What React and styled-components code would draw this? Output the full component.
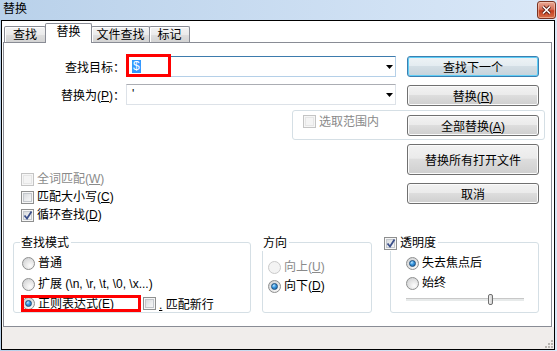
import React from 'react';
import styled, { createGlobalStyle } from 'styled-components';

const GlobalStyle = createGlobalStyle`
  body {
    margin: 0;
    background: #fff;
    font-family: "Liberation Sans", "Noto Sans CJK SC", sans-serif;
    font-size: 12px;
    color: #000;
  }
`;

const Window = styled.div`
  width: 557px;
  height: 351px;
  display: flex;
  flex-direction: column;
  background: linear-gradient(to right, #b9d1ea, #dae8f8);
  overflow: hidden;
`;

const TitleBar = styled.div`
  height: 20px;
  display: flex;
  align-items: flex-start;
  justify-content: space-between;
  padding: 0 1px 0 3px;
`;

const TitleText = styled.span`
  line-height: 18px;
`;

const CloseButton = styled.div`
  box-sizing: border-box;
  width: 19px;
  height: 18px;
  margin-top: 1px;
  display: flex;
  align-items: center;
  justify-content: center;
  border: 1px solid #7a3322;
  border-radius: 3px;
  background: linear-gradient(#e9a995 0%, #d7715a 45%, #c43b1d 55%, #d8704a 100%);
  box-shadow: inset 0 0 0 1px rgba(255, 220, 200, 0.5);
`;

const Client = styled.div`
  flex: 1;
  margin: 0 2px 1px 1px;
  border: 1px solid #000;
  background: #fff;
  display: flex;
  flex-direction: column;
`;

const TabStrip = styled.div`
  height: 21px;
  display: flex;
  align-items: flex-end;
  padding-left: 2px;
`;

const Tab = styled.div`
  position: relative;
  z-index: ${({ $active }) => ($active ? 1 : 0)};
  box-sizing: border-box;
  width: ${({ $w }) => $w}px;
  height: ${({ $active }) => ($active ? 20 : 16)}px;
  margin-left: -1px;
  margin-bottom: ${({ $active }) => ($active ? -1 : 0)}px;
  padding-bottom: ${({ $active }) => ($active ? 3 : 0)}px;
  display: flex;
  align-items: center;
  justify-content: center;
  border: 1px solid #898c95;
  border-bottom: none;
  border-radius: 2px 2px 0 0;
  background: ${({ $active }) =>
    $active ? '#fff' : 'linear-gradient(#f4f4f4 0%, #ebebeb 50%, #dedede 55%, #d3d3d3 100%)'};
  box-shadow: ${({ $active }) => ($active ? 'none' : 'inset 1px 1px 0 #fff')};
  line-height: 14px;

  &:first-child {
    margin-left: 0;
  }
`;

const Panel = styled.div`
  box-sizing: border-box;
  height: 285px;
  margin: 0 2px 0 1px;
  padding-top: 13px;
  border: 1px solid #898c95;
  background: #fff;
`;

const TopGrid = styled.div`
  display: grid;
  grid-template-columns: 122px 166px 104px 11px 132px;
  align-items: start;
`;

const FieldLabel = styled.label`
  grid-column: 1;
  height: 21px;
  margin-top: ${({ $top }) => $top || 0}px;
  padding-right: 1px;
  display: flex;
  align-items: center;
  justify-content: flex-end;
  white-space: nowrap;
`;

const Combo = styled.div`
  grid-column: 2 / 4;
  position: relative;
  box-sizing: border-box;
  height: 21px;
  margin-top: ${({ $top }) => $top || 0}px;
  padding: 0 2px 0 5px;
  display: flex;
  align-items: center;
  justify-content: space-between;
  border: 1px solid ${({ $focused }) => ($focused ? '#b5d0e8' : '#dde2e8')};
  border-top-color: ${({ $focused }) => ($focused ? '#3d7bad' : '#abadb3')};
  background: #fff;
`;

const ComboText = styled.span`
  line-height: 13px;
`;

const Selected = styled.span`
  display: inline-block;
  padding: 0 1px;
  line-height: 13px;
  background: #3399ff;
  color: #fff;
`;

const Marker = styled.div`
  position: absolute;
  left: ${({ $left }) => $left}px;
  top: ${({ $top }) => $top}px;
  width: ${({ $w }) => $w}px;
  height: ${({ $h }) => $h}px;
  box-sizing: border-box;
  border: 3px solid #f00;
  pointer-events: none;
`;

const Button = styled.button`
  grid-column: 5;
  box-sizing: border-box;
  width: 132px;
  height: ${({ $tall }) => ($tall ? 31 : 21)}px;
  margin-top: ${({ $top }) => $top || 0}px;
  padding: 0;
  font: inherit;
  color: #000;
  border: 1px solid ${({ $default }) => ($default ? '#3c7fb1' : '#707070')};
  border-radius: 3px;
  background: ${({ $default }) =>
    $default
      ? 'linear-gradient(#eef3f6 0%, #e4ecf1 45%, #d3dee5 50%, #c6d3db 100%)'
      : 'linear-gradient(#f2f2f2 0%, #ebebeb 45%, #dddddd 50%, #cfcfcf 100%)'};
  box-shadow: inset 0 0 0 1px ${({ $default }) => ($default ? '#5fcdf5' : '#fbfbfb')};
`;

const SelectionBox = styled.div`
  grid-column: 3 / 6;
  box-sizing: border-box;
  height: 30px;
  margin-top: 4px;
  margin-right: -6px;
  padding: 4px 5px 0 10px;
  display: flex;
  align-items: flex-start;
  justify-content: space-between;
  border: 1px solid #d5dfe5;
  border-radius: 3px;
`;

const MidRow = styled.div`
  display: flex;
  margin-top: 4px;
`;

const CheckList = styled.div`
  width: 403px;
  box-sizing: border-box;
  padding: 26px 0 0 17px;
  display: flex;
  flex-direction: column;
`;

const ButtonColumn = styled.div`
  display: flex;
  flex-direction: column;
`;

const Option = styled.label`
  position: relative;
  display: flex;
  align-items: center;
  gap: 3px;
  height: ${({ $h }) => $h || 16}px;
  margin-top: ${({ $top }) => $top || 0}px;
  width: ${({ $w }) => ($w ? `${$w}px` : 'auto')};
  line-height: 16px;
  white-space: nowrap;
  color: ${({ $disabled }) => ($disabled ? '#8a8a8a' : '#000')};
`;

const Box = styled.span`
  position: relative;
  flex: none;
  box-sizing: border-box;
  width: 13px;
  height: 13px;
  border: 1px solid ${({ $disabled }) => ($disabled ? '#c4c4c4' : '#8e8f8f')};
  background: ${({ $disabled }) =>
    $disabled ? '#f4f4f4' : 'linear-gradient(135deg, #cfd2d6 0%, #eeeff0 60%, #fafafa 100%)'};
  box-shadow: inset 0 0 0 1px #f6f6f6, inset 0 0 0 2px ${({ $disabled }) => ($disabled ? '#e6e6e6' : '#c3c7cc')};

  svg {
    position: absolute;
    left: 1px;
    top: 0;
  }
`;

const Radio = styled.span`
  position: relative;
  flex: none;
  box-sizing: border-box;
  width: 13px;
  height: 13px;
  border-radius: 50%;
  border: 1px solid ${({ $disabled }) => ($disabled ? '#cacaca' : '#8e8f8f')};
  background: ${({ $disabled }) =>
    $disabled ? '#f3f3f3' : 'radial-gradient(circle at 65% 70%, #fdfdfd 0%, #e6e6e6 45%, #c8cacd 100%)'};

  &::after {
    content: '';
    display: ${({ $checked }) => ($checked ? 'block' : 'none')};
    position: absolute;
    left: 2px;
    top: 2px;
    width: 7px;
    height: 7px;
    box-sizing: border-box;
    border-radius: 50%;
    border: 1px solid #1b4d7c;
    background: radial-gradient(circle at 35% 30%, #bfe7ff 0%, #3d9be3 40%, #125a9e 100%);
  }
`;

const Key = styled.u`
  text-underline-offset: 1px;
`;

const GroupsRow = styled.div`
  display: flex;
  margin-top: 18px;
  padding-left: 9px;
`;

const Group = styled.div`
  position: relative;
  box-sizing: border-box;
  width: ${({ $w }) => $w}px;
  height: 71px;
  margin-left: ${({ $gap }) => $gap || 0}px;
  padding: ${({ $pad }) => $pad};
  border: 1px solid #d5dfe5;
  border-radius: 3px;
`;

const Caption = styled.div`
  position: absolute;
  left: ${({ $left }) => $left}px;
  top: -8px;
  display: flex;
  align-items: center;
  gap: 3px;
  padding: 0 2px 0 ${({ $padLeft }) => ($padLeft === undefined ? 1 : $padLeft)}px;
  line-height: 16px;
  background: #fff;
`;

const InlineRow = styled.div`
  display: flex;
  align-items: center;
  gap: 3px;
  margin-top: 3px;
`;

const Slider = styled.div`
  position: relative;
  width: 118px;
  height: 11px;
  margin-top: 3px;

  &::before {
    content: '';
    position: absolute;
    left: 0;
    right: 0;
    top: 4px;
    height: 2px;
    background: #e7eaea;
    border-top: 1px solid #c8c8c8;
  }
`;

const Thumb = styled.span`
  position: absolute;
  left: ${({ $at }) => $at}px;
  top: 0;
  box-sizing: border-box;
  width: 5px;
  height: 11px;
  border: 1px solid #707070;
  border-radius: 2px;
  background: linear-gradient(to right, #f2f2f2, #d4d4d4);
`;

const BottomStrip = styled.div`
  flex: 1;
  display: flex;
  justify-content: flex-end;
  align-items: flex-end;
  background: #f0edeb;
`;

const Check = () => (
  <svg width="10" height="11" viewBox="0 0 10 11">
    <path d="M1.5 5.5 L4 8.5 L8.5 1.5" fill="none" stroke="#3b4f8a" strokeWidth="1.8" />
  </svg>
);

const Arrow = () => (
  <svg width="7" height="4" viewBox="0 0 7 4">
    <polygon points="0,0 7,0 3.5,4" fill="#000" />
  </svg>
);

const CloseIcon = () => (
  <svg width="11" height="10" viewBox="0 0 11 10">
    <path d="M2 1.5 L9 8.5 M9 1.5 L2 8.5" stroke="#5a1e12" strokeWidth="3.2" />
    <path d="M2 1.5 L9 8.5 M9 1.5 L2 8.5" stroke="#fff" strokeWidth="1.6" />
  </svg>
);

const Grip = () => (
  <svg width="11" height="11" viewBox="0 0 11 11">
    {[
      [8, 2],
      [5, 5],
      [8, 5],
      [2, 8],
      [5, 8],
      [8, 8],
    ].map(([x, y]) => (
      <rect key={`${x}-${y}`} x={x} y={y} width="2" height="2" fill="#b8b4b0" />
    ))}
  </svg>
);

const tabs = [
  { label: '查找', w: 42 },
  { label: '替换', w: 47, active: true },
  { label: '文件查找', w: 59 },
  { label: '标记', w: 41 },
];

const App = () => {
  return (
    <>
      <GlobalStyle />
      <Window>
        <TitleBar>
          <TitleText>替换</TitleText>
          <CloseButton>
            <CloseIcon />
          </CloseButton>
        </TitleBar>
        <Client>
          <TabStrip>
            {tabs.map((tab) => (
              <Tab key={tab.label} $w={tab.w} $active={tab.active}>
                {tab.label}
              </Tab>
            ))}
          </TabStrip>
          <Panel>
            <TopGrid>
              <FieldLabel>查找目标：</FieldLabel>
              <Combo $focused>
                <ComboText>
                  <Selected>$</Selected>
                </ComboText>
                <Arrow />
                <Marker $left={-1} $top={-3} $w={45} $h={23} />
              </Combo>
              <Button $default>查找下一个</Button>

              <FieldLabel $top={7}>
                <span>
                  替换为(<Key>P</Key>)：
                </span>
              </FieldLabel>
              <Combo $top={7}>
                <ComboText>'</ComboText>
                <Arrow />
              </Combo>
              <Button $top={8}>
                替换(<Key>R</Key>)
              </Button>

              <SelectionBox>
                <Option $disabled $h={13}>
                  <Box $disabled />
                  <span>选取范围内</span>
                </Option>
                <Button>
                  全部替换(<Key>A</Key>)
                </Button>
              </SelectionBox>
            </TopGrid>

            <MidRow>
              <CheckList>
                <Option $disabled $h={18}>
                  <Box $disabled />
                  <span>
                    全词匹配(<Key>W</Key>)
                  </span>
                </Option>
                <Option $h={18}>
                  <Box />
                  <span>
                    匹配大小写(<Key>C</Key>)
                  </span>
                </Option>
                <Option $h={18}>
                  <Box>
                    <Check />
                  </Box>
                  <span>
                    循环查找(<Key>D</Key>)
                  </span>
                </Option>
              </CheckList>
              <ButtonColumn>
                <Button $tall>替换所有打开文件</Button>
                <Button $top={8}>取消</Button>
              </ButtonColumn>
            </MidRow>

            <GroupsRow>
              <Group $w={238} $pad="12px 0 0 8px">
                <Caption $left={6}>查找模式</Caption>
                <Option>
                  <Radio />
                  <span>普通</span>
                </Option>
                <Option $top={5}>
                  <Radio />
                  <span>{'扩展 (\\n, \\r, \\t, \\0, \\x...)'}</span>
                </Option>
                <InlineRow>
                  <Option $w={118}>
                    <Radio $checked />
                    <Key>正则表达式(E)</Key>
                    <Marker $left={-1} $top={-1} $w={120} $h={17} />
                  </Option>
                  <Box />
                  <span>
                    <Key>.</Key> 匹配新行
                  </span>
                </InlineRow>
              </Group>

              <Group $w={110} $gap={11} $pad="16px 0 0 5px">
                <Caption $left={-1}>方向</Caption>
                <Option $disabled>
                  <Radio $disabled />
                  <span>
                    向上(<Key>U</Key>)
                  </span>
                </Option>
                <Option $top={3}>
                  <Radio $checked />
                  <span>
                    向下(<Key>D</Key>)
                  </span>
                </Option>
              </Group>

              <Group $w={149} $gap={18} $pad="12px 0 0 15px">
                <Caption $left={-7} $padLeft={0}>
                  <Box>
                    <Check />
                  </Box>
                  <span>透明度</span>
                </Caption>
                <Option>
                  <Radio $checked />
                  <span>失去焦点后</span>
                </Option>
                <Option $top={4}>
                  <Radio />
                  <span>始终</span>
                </Option>
                <Slider>
                  <Thumb $at={82} />
                </Slider>
              </Group>
            </GroupsRow>
          </Panel>
          <BottomStrip>
            <Grip />
          </BottomStrip>
        </Client>
      </Window>
    </>
  );
};

export default App;
